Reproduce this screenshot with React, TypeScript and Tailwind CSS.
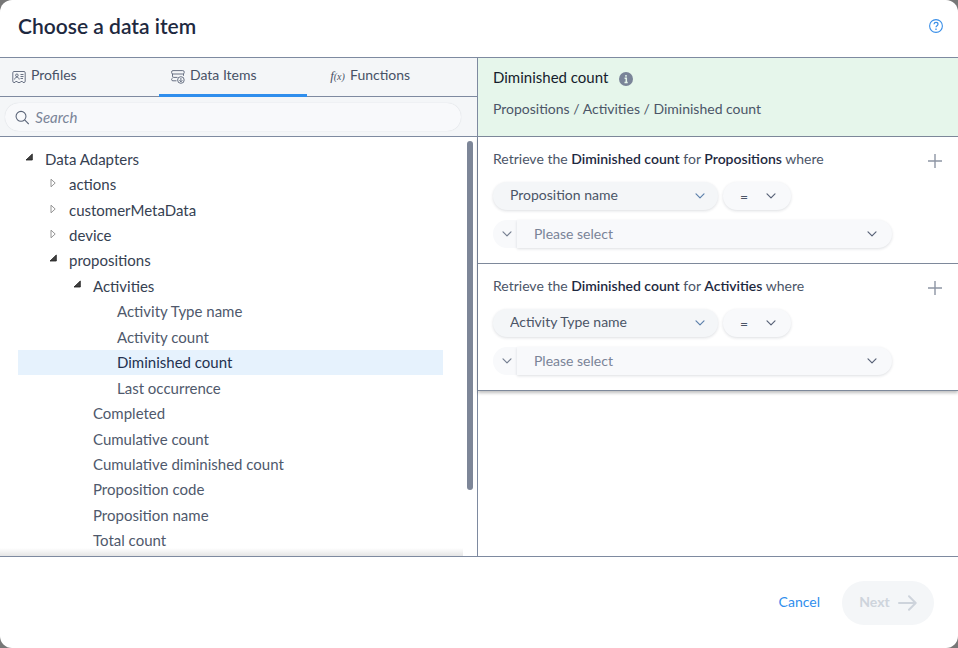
import type { ReactNode } from "react";

const font = "font-['Lato','Noto_Sans',sans-serif]";

function Chevron({ className = "" }: { className?: string }) {
  return (
    <svg viewBox="0 0 10 6" className={`pointer-events-none h-[6px] w-[10px] fill-none stroke-current ${className}`} aria-hidden="true">
      <path d="M1 .8l4 4 4-4" strokeWidth="1.2" strokeLinecap="round" strokeLinejoin="round" />
    </svg>
  );
}

function ProfileIcon() {
  return (
    <svg viewBox="0 0 14 14" className="h-[14px] w-[14px] fill-none stroke-[#596377]" aria-hidden="true">
      <path d="M2 1.5h10c.8 0 1.2.5 1.2 1.2v8.6c0 .7-.4 1.2-1.2 1.2h-1l-.6-1H8.8l-.6 1H5.8l-.6-1H3.6l-.6 1H2c-.8 0-1.2-.5-1.2-1.2V2.700c0-.7.4-1.200 1.200-1.200z" strokeWidth=".9" />
      <circle cx="4.900" cy="5.300" r="1.300" strokeWidth=".9" />
      <path d="M2.600 9.500c.2-1.600 1-2.200 2.300-2.200s2.100.6 2.300 2.200M8.500 4.500h3M8.500 6.500h3M8.500 8.500h2.500" strokeWidth=".9" />
    </svg>
  );
}

function DataIcon() {
  return (
    <svg viewBox="0 0 14 14" className="h-[14px] w-[14px] fill-none stroke-[#596377]" aria-hidden="true">
      <rect x=".6" y=".6" width="12.600" height="3.400" rx="1.400" strokeWidth=".9" />
      <path d="M1.500 4v2.200c0 .8.500 1.200 1.200 1.200H6.500M12.500 4v1.800M1.600 8c-.8.300-1 .9-1 1.500 0 .8.500 1.300 1.300 1.300H5.500" strokeWidth=".9" />
      <circle cx="9.900" cy="10" r="3.300" strokeWidth=".9" />
      <path d="M9.900 8v3.800M8.400 10.300l1.500 1.500 1.500-1.500" strokeWidth=".9" />
    </svg>
  );
}

function FunctionIcon() {
  return (
    <span className="w-[15px] whitespace-nowrap font-['Liberation_Serif',serif] text-[13px] leading-4 italic" aria-hidden="true">
      f<span className="text-[10px]">(x)</span>
    </span>
  );
}

function Tab({ icon, label, active = false }: { icon: ReactNode; label: string; active?: boolean }) {
  return (
    <button
      role="tab"
      aria-selected={active}
      className={`flex h-[39px] w-[148px] items-start gap-[5px] border-b-[3px] pt-[7px] pl-3 text-[14px] leading-5 text-[#475166] ${active ? "border-[#2f8eed]" : "border-transparent"}`}
    >
      <span className="flex h-5 items-center pt-[3px]">{icon}</span>
      {label}
    </button>
  );
}

type Item = { label: string; level: number; state?: "open" | "closed"; selected?: boolean };

const items: Item[] = [
  { label: "Data Adapters", level: 0, state: "open" },
  { label: "actions", level: 1, state: "closed" },
  { label: "customerMetaData", level: 1, state: "closed" },
  { label: "device", level: 1, state: "closed" },
  { label: "propositions", level: 1, state: "open" },
  { label: "Activities", level: 2, state: "open" },
  { label: "Activity Type name", level: 3 },
  { label: "Activity count", level: 3 },
  { label: "Diminished count", level: 3, selected: true },
  { label: "Last occurrence", level: 3 },
  { label: "Completed", level: 2 },
  { label: "Cumulative count", level: 2 },
  { label: "Cumulative diminished count", level: 2 },
  { label: "Proposition code", level: 2 },
  { label: "Proposition name", level: 2 },
  { label: "Total count", level: 2 },
];

const indents = ["pl-[6px]", "pl-[30px]", "pl-[54px]", "pl-[78px]"];

function TreeRow({ label, level, state, selected }: Item) {
  const tone = selected ? "text-[#233150]" : state ? "text-[#364152]" : "text-[#4f596c]";
  return (
    <li
      role="treeitem"
      aria-level={level + 1}
      aria-selected={!!selected}
      aria-expanded={state ? state === "open" : undefined}
      className={`flex min-h-6 flex-1 items-center text-[15px] leading-6 ${indents[level]} ${tone} ${selected ? "bg-[#e6f2fd]" : ""}`}
    >
      <span className="flex h-5 w-[21px] items-start pt-1">
        {state === "open" && (
          <svg viewBox="0 0 8 8" className="ml-[1px] h-2 w-2" aria-hidden="true">
            <path d="M7.300 1v6H1z" fill="#404040" stroke="#202020" strokeWidth=".8" />
          </svg>
        )}
        {state === "closed" && (
          <svg viewBox="0 0 8 10" className="ml-[1px] h-[10px] w-2" aria-hidden="true">
            <path d="M2 1.200v7.600L6.200 5z" fill="#fff" stroke="#8a8a8a" strokeWidth=".9" />
          </svg>
        )}
      </span>
      {label}
    </li>
  );
}

function Condition({ entity, field }: { entity: string; field: string }) {
  return (
    <section className="border-b border-[#7e899b] pt-3 pr-4 pb-[15px] pl-[15px]">
      <div className="flex items-center justify-between">
        <p className="text-[14px] leading-5 text-[#4b5567]">
          Retrieve the <b className="font-semibold text-[#1e293f]">Diminished count</b> for{" "}
          <b className="font-semibold text-[#1e293f]">{entity}</b> where
        </p>
        <button aria-label={`Add condition for ${entity}`} className="pt-1">
          <svg viewBox="0 0 14 14" className="h-[14px] w-[14px] stroke-[#8d95a4]" aria-hidden="true">
            <path d="M7 0v14M0 7h14" strokeWidth="1.400" />
          </svg>
        </button>
      </div>
      <div className="mt-[13px] flex items-center gap-[5px]">
        <div className="relative w-[225px]">
          <select
            aria-label="Field"
            className="block h-7 w-full appearance-none rounded-full bg-[#f4f6f8] pr-8 pb-[3px] pl-[17px] text-[14px] text-[#4b5567] shadow-[0_1px_3px_rgba(30,41,63,0.15)]"
          >
            <option>{field}</option>
          </select>
          <Chevron className="absolute top-[11px] right-[13px] text-[#5e81ac]" />
        </div>
        <div className="relative w-[68px]">
          <select
            aria-label="Operator"
            className="block h-7 w-full appearance-none rounded-full bg-[#f8f9fb] pl-[17px] text-[14px] text-[#4b5567] shadow-[0_1px_3px_rgba(30,41,63,0.15)]"
          >
            <option>=</option>
          </select>
          <Chevron className="absolute top-[11px] right-[15px] text-[#596377]" />
        </div>
      </div>
      <div className="mt-[10px] flex w-[399px] max-w-full">
        <button aria-label="Value type" className="flex h-7 w-6 items-center justify-center rounded-l-full bg-[#f8f9fb] pl-1 text-[#778092]">
          <Chevron />
        </button>
        <div className="relative flex-1">
          <select
            aria-label="Value"
            className="block h-7 w-full appearance-none rounded-r-full bg-[#f8f9fb] pb-[2px] pl-[17px] text-[14px] text-[#7a8498] shadow-[0_1px_3px_rgba(30,41,63,0.15)]"
          >
            <option>Please select</option>
          </select>
          <Chevron className="absolute top-[11px] right-[15px] text-[#596377]" />
        </div>
      </div>
    </section>
  );
}

export default function App() {
  return (
    <div className={`min-h-screen bg-[#777777] ${font}`}>
      <div role="dialog" aria-labelledby="title" className="flex min-h-screen flex-col overflow-hidden rounded-[12px] bg-white">
        <header className="flex h-[58px] items-center justify-between border-b border-[#7e8aa0] pr-[15px] pb-[5px] pl-[18px]">
          <h1 id="title" className="text-[21px] leading-7 font-semibold text-[#1e293f]">Choose a data item</h1>
          <button aria-label="Help" className="text-[#3a8fe8]">
            <svg viewBox="0 0 14 14" className="h-[14px] w-[14px] fill-none stroke-current" aria-hidden="true">
              <circle cx="7" cy="7" r="6.400" strokeWidth="1.100" />
              <path d="M5 5.300c.1-1.200.9-1.900 2-1.900s2 .7 2 1.800c0 1.400-2 1.600-2 3.100" strokeWidth="1.200" />
              <path d="M7 9.600v1.300" strokeWidth="1.300" />
            </svg>
          </button>
        </header>

        <main className="grid flex-1 grid-cols-[minmax(0,478fr)_minmax(0,480fr)]">
          <div className="flex flex-col border-r border-[#7e8aa0]">
            <div role="tablist" className="flex h-[39px] justify-start gap-[11px] border-b border-[#7e8aa0] bg-[#f4f6f8]">
              <Tab icon={<ProfileIcon />} label="Profiles" />
              <Tab icon={<DataIcon />} label="Data Items" active />
              <Tab icon={<FunctionIcon />} label="Functions" />
            </div>
            <div className="flex h-10 items-center border-b border-[#7e8aa0] bg-[#f4f6f8] pr-4 pl-[5px]">
              <label className="flex h-7 flex-1 items-center gap-[6px] rounded-full bg-[#f8f9fb] pl-[10px] shadow-[0_0_1px_rgba(30,41,63,0.2)]">
                <svg viewBox="0 0 15 15" className="mt-[2px] h-[15px] w-[15px] fill-none stroke-[#596377]" aria-hidden="true">
                  <circle cx="6.300" cy="6.300" r="5.200" strokeWidth="1.100" />
                  <path d="M10.100 10.100l4.300 4.300" strokeWidth="1.100" />
                </svg>
                <input aria-label="Search" placeholder="Search" className="w-full bg-transparent text-[15px] leading-5 italic outline-none placeholder:text-[#7a8498]" />
              </label>
            </div>
            <div className="flex flex-1 bg-[linear-gradient(to_top,rgba(0,0,0,0.1),transparent_8px)]">
              <ul role="tree" className="flex flex-1 flex-col pt-[9px] pb-[3px] pl-[18px]">
                {items.map((item) => (
                  <TreeRow key={item.label} {...item} />
                ))}
              </ul>
              <div className="w-5" />
              <div className="flex w-[14px] flex-col items-end bg-white pt-1 pr-1" aria-hidden="true">
                <div className="h-[84%] w-[6px] rounded-full bg-[#7d8698]" />
              </div>
            </div>
          </div>

          <div>
            <div className="flex h-[79px] flex-col border-b border-[#7e899b] bg-[#e6f6eb] pt-2 pl-[15px]">
              <h2 className="flex items-center gap-[11px] text-[15px] leading-[22px] text-[#151d2b]">
                Diminished count
                <button aria-label="Information" className="pt-[3px]">
                  <svg viewBox="0 0 14 14" className="h-[14px] w-[14px]" aria-hidden="true">
                    <circle cx="7" cy="7" r="7" fill="#7a8498" />
                    <path d="M7 3v1.800M5.600 6.300H7.300v4M5.500 10.500h3.200" fill="none" stroke="#e6f6eb" strokeWidth="1.500" />
                  </svg>
                </button>
              </h2>
              <p className="mt-[11px] text-[14px] leading-5 text-[#4b5567]">Propositions / Activities / Diminished count</p>
            </div>
            <div className="shadow-[0_2px_3px_rgba(0,0,0,0.25)]">
              <Condition entity="Propositions" field="Proposition name" />
              <Condition entity="Activities" field="Activity Type name" />
            </div>
          </div>
        </main>

        <footer className="flex h-[92px] items-center justify-end gap-[22px] border-t border-[#7e8aa0] pr-6">
          <button className="pb-[2px] text-[14px] leading-5 text-[#2f8eed]">Cancel</button>
          <button disabled className="flex h-11 w-[92px] items-center justify-center gap-2 rounded-full bg-[#f4f6f8] text-[14px] font-bold text-[#ced4dc]">
            <span className="pb-[2px]">Next</span>
            <svg viewBox="0 0 19 16" className="h-4 w-[19px] fill-none stroke-current" aria-hidden="true">
              <path d="M1 8h16.500M11 1.200L17.700 8 11 14.800" strokeWidth="2" strokeLinecap="round" strokeLinejoin="round" />
            </svg>
          </button>
        </footer>
      </div>
    </div>
  );
}
